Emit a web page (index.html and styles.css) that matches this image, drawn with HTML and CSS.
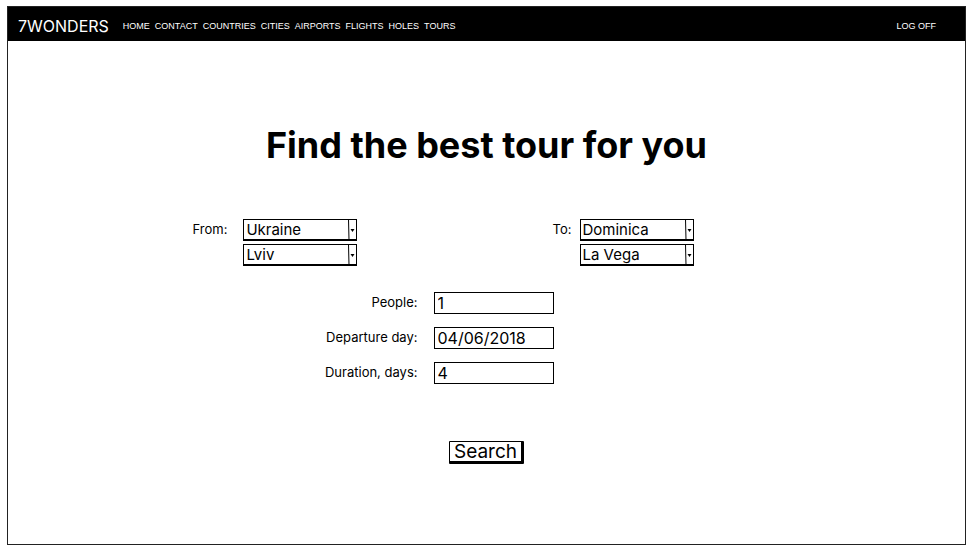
FILE: index.html
```html
<!DOCTYPE html>
<html lang="en">
<head>
<meta charset="utf-8">
<meta name="viewport" content="width=device-width, initial-scale=1">
<title>7WONDERS</title>
<link rel="stylesheet" href="styles.css">
</head>
<body>
<div class="page">
  <header class="topbar">
    <a class="brand" href="#">7WONDERS</a>
    <nav class="menu">
      <a href="#">HOME</a>
      <a href="#">CONTACT</a>
      <a href="#">COUNTRIES</a>
      <a href="#">CITIES</a>
      <a href="#">AIRPORTS</a>
      <a href="#">FLIGHTS</a>
      <a href="#">HOLES</a>
      <a href="#">TOURS</a>
    </nav>
    <a class="logoff" href="#">LOG OFF</a>
  </header>
  <main>
    <h1>Find the best tour for you</h1>
    <form class="search">
      <div class="route">
        <div class="place">
          <label for="from">From:</label>
          <div class="selects">
            <div class="select">
              <select id="from"><option>Ukraine</option></select>
              <svg viewBox="0 0 9 21" aria-hidden="true"><path class="line" d="M0.5 0L1 21"/><path d="M2.5 10h4l-2 3z"/></svg>
            </div>
            <div class="select">
              <select aria-label="From city"><option>Lviv</option></select>
              <svg viewBox="0 0 9 21" aria-hidden="true"><path class="line" d="M0.5 0L1 21"/><path d="M2.5 10h4l-2 3z"/></svg>
            </div>
          </div>
        </div>
        <div class="place">
          <label for="to">To:</label>
          <div class="selects">
            <div class="select">
              <select id="to"><option>Dominica</option></select>
              <svg viewBox="0 0 9 21" aria-hidden="true"><path class="line" d="M0.5 0L1 21"/><path d="M2.5 10h4l-2 3z"/></svg>
            </div>
            <div class="select">
              <select aria-label="To city"><option>La Vega</option></select>
              <svg viewBox="0 0 9 21" aria-hidden="true"><path class="line" d="M0.5 0L1 21"/><path d="M2.5 10h4l-2 3z"/></svg>
            </div>
          </div>
        </div>
      </div>
      <div class="details">
        <label for="people">People:</label>
        <input id="people" type="text" value="1">
        <label for="day">Departure day:</label>
        <input id="day" type="text" value="04/06/2018">
        <label for="duration">Duration, days:</label>
        <input id="duration" type="text" value="4">
      </div>
      <button type="submit">Search</button>
    </form>
  </main>
</div>
</body>
</html>
```
FILE: styles.css
```css
* {
  box-sizing: border-box;
}

body {
  margin: 0;
  padding: 6px 4px 4px 7px;
  min-height: 100vh;
  display: flex;
  background: #fff;
  color: #000;
  font-family: Inter, "Liberation Sans", sans-serif;
  font-size: 13px;
  line-height: 20px;
}

.page {
  flex: 1;
  border: 1px solid #222;
}

.topbar {
  display: flex;
  align-items: center;
  height: 34px;
  padding: 3px 29px 0 10px;
  background: #000;
  font-family: "Liberation Sans", sans-serif;
  font-size: 9px;
}

.topbar a {
  color: #fff;
  text-decoration: none;
}

.topbar .brand {
  margin-right: 14px;
  font-family: Inter, sans-serif;
  font-size: 16px;
}

.menu {
  display: flex;
  gap: 5px;
}

.logoff {
  margin-left: auto;
}

h1 {
  margin: 82px 0 0;
  text-align: center;
  font-size: 36px;
  line-height: 44px;
  font-weight: 700;
}

.search {
  max-width: 588px;
  margin: 52px auto 0;
  display: flex;
  flex-direction: column;
}

.route {
  display: flex;
  justify-content: space-between;
  padding-right: 87px;
}

.place {
  display: flex;
  gap: 8px;
}

.place:first-child {
  gap: 16px;
}

.selects {
  display: grid;
  gap: 3px;
}

.select {
  position: relative;
}

select,
input {
  display: block;
  height: 22px;
  margin: 0;
  padding: 0 3px;
  border: 1px solid #000;
  border-radius: 0;
  background: #fff;
  color: #000;
  font: 16px Inter, sans-serif;
}

select {
  appearance: none;
  width: 114px;
  padding: 0 12px 0 2px;
  border-bottom-width: 2px;
  font-size: 15px;
  line-height: 19px;
}

.select svg {
  position: absolute;
  top: 0;
  right: 0;
  width: 9px;
  height: 21px;
  pointer-events: none;
}

.line {
  fill: none;
  stroke: #000;
}

.details {
  display: grid;
  grid-template-columns: 225px 120px;
  gap: 13px 16px;
  margin-top: 26px;
}

.details label {
  text-align: right;
}

button {
  align-self: center;
  height: 23px;
  margin-top: 57px;
  padding: 0 4px;
  border: 1px solid #000;
  border-width: 1px 3px 3px 1px;
  border-radius: 1px;
  background: #fff;
  color: #000;
  font: 19px/19px Inter, sans-serif;
}
```
